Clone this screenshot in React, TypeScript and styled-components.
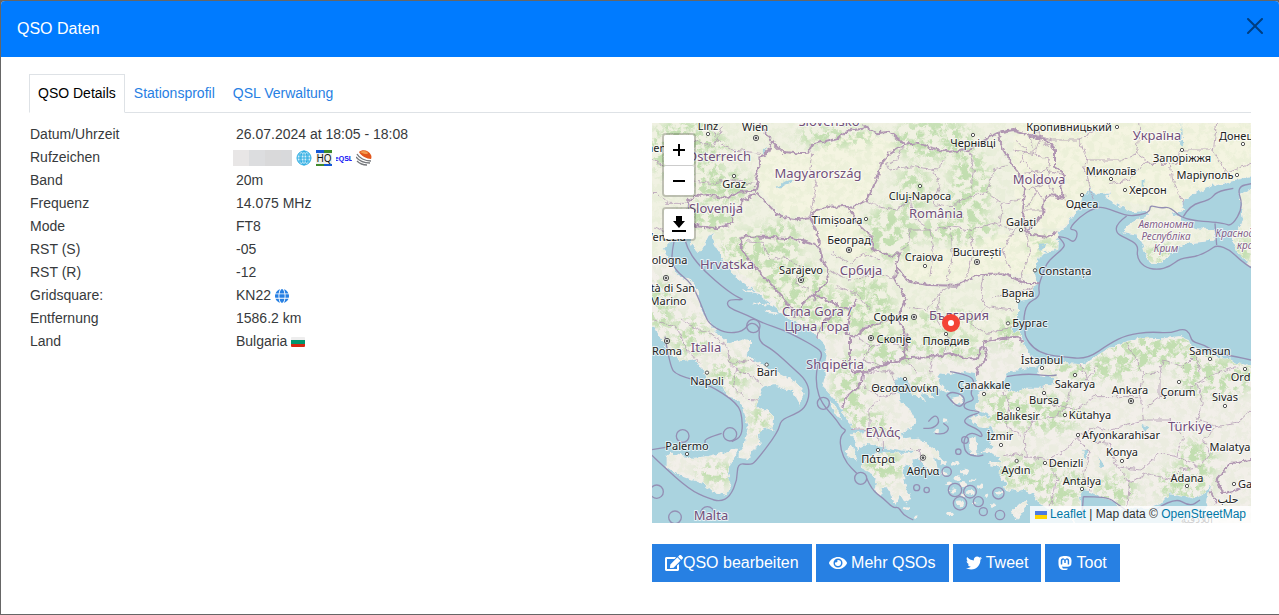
import React from 'react';
import styled, { createGlobalStyle } from 'styled-components';
import { FaEdit, FaEye, FaTwitter, FaMastodon } from 'react-icons/fa';
import { FaGlobe } from 'react-icons/fa6';

const GlobalStyle = createGlobalStyle`
  * { box-sizing: border-box; }
  body {
    margin: 0;
    background: #666;
    color: #373a3c;
    font: 14px/21px "Liberation Sans", Arial, sans-serif;
  }
  a { color: #2780e3; text-decoration: none; }
`;

const Page = styled.div`
  padding: 1px 0 1px 1px;
`;

const Dialog = styled.section`
  background: #fff;
  border-radius: 4px 4px 0 0;
  overflow: hidden;
`;

const Header = styled.header`
  display: flex;
  align-items: center;
  justify-content: space-between;
  height: 56px;
  padding: 0 16px;
  background: #007bff;
  color: #fff;
`;

const Title = styled.h1`
  margin: 0;
  font-size: 16px;
  line-height: 24px;
  font-weight: 400;
`;

const CloseButton = styled.button`
  display: flex;
  padding: 0 0 6px;
  border: 0;
  background: none;
  color: #000;
  opacity: 0.5;
  cursor: pointer;
`;

const Body = styled.div`
  padding: 17px 28px 32px;
`;

const Tabs = styled.nav`
  display: flex;
  border-bottom: 1px solid #dee2e6;
`;

const Tab = styled.a<{ $active?: boolean }>`
  padding: 8px;
  margin-bottom: -1px;
  border: 1px solid;
  border-color: ${(p) => (p.$active ? '#dee2e6 #dee2e6 #fff' : 'transparent')};
  && { color: ${(p) => (p.$active ? '#000' : '#2780e3')}; }
`;

const Columns = styled.div`
  display: grid;
  grid-template-columns: 1fr 1fr;
  margin-top: 10px;
`;

const DetailTable = styled.table`
  width: 100%;
  border-collapse: collapse;
  align-self: start;
`;

const Label = styled.th`
  width: 204px;
  padding: 1px;
  font-weight: 400;
  text-align: left;
`;

const Value = styled.td<{ $flush?: boolean }>`
  padding: 1px 1px 1px ${(p) => (p.$flush ? 0 : 3)}px;
`;

const Inline = styled.span<{ $gap: number }>`
  display: flex;
  align-items: center;
  gap: ${(p) => p.$gap}px;
  height: 21px;
  a, svg { display: block; }
`;

const MaskedCall = styled.span`
  width: 59px;
  height: 16px;
  background: linear-gradient(90deg, #e8e6e6 0 16px, #dcdddf 16px 32px, #d9d9da 32px 48px, #d8d9db 48px);
`;

const MapColumn = styled.div`
  padding-left: 12px;
`;

const MapFrame = styled.div`
  position: relative;
  height: 400px;
  overflow: hidden;
  background: #aad3df;
`;

const MapSvg = styled.svg`
  display: block;
  width: 100%;
  height: 100%;
  font-family: "Noto Sans", "DejaVu Sans", sans-serif;
`;

const Controls = styled.div`
  position: absolute;
  top: 10px;
  left: 10px;
  display: flex;
  flex-direction: column;
  gap: 10px;
`;

const ControlBar = styled.div`
  border: 2px solid rgba(0, 0, 0, 0.2);
  border-radius: 4px;
  background-clip: padding-box;
`;

const ControlButton = styled.button`
  display: flex;
  align-items: center;
  justify-content: center;
  width: 30px;
  height: 30px;
  padding: 0;
  border: 0;
  border-radius: 2px;
  background: #fff;
  color: #000;
  cursor: pointer;
  & + & { border-top: 1px solid #ccc; }
`;

const Attribution = styled.div`
  position: absolute;
  right: 0;
  bottom: 0;
  padding: 0 5px;
  background: rgba(255, 255, 255, 0.8);
  color: #333;
  font-size: 12px;
  line-height: 17px;
  a { color: #0078a8; }
  svg { vertical-align: -1px; }
`;

const Actions = styled.div`
  display: flex;
  gap: 4px;
  margin-top: 21px;
`;

const Action = styled.button`
  display: flex;
  align-items: center;
  height: 38px;
  padding: 0 13px;
  border: 0;
  background: #2780e3;
  color: #fff;
  font: 16px/24px "Liberation Sans", Arial, sans-serif;
  white-space: pre;
  cursor: pointer;
`;

// Outlines are digitised on a grid three times finer than the map's pixels.
const LAND = [
  '0,0 0,600 30,650 60,695 95,722 130,716 150,735 165,760 180,785 212,785 225,820 240,832 262,838 280,850 285,880 298,920 288,945 283,975 268,995 268,1012 295,1015 310,985 330,972 325,945 345,920 368,928 370,892 340,865 325,870 322,845 335,805 350,795 370,790 400,805 430,815 450,852 460,815 440,790 380,760 330,730 288,705 302,665 270,660 232,672 205,645 185,620 165,595 150,560 140,510 120,480 90,475 60,430 45,405 40,385 60,365 105,355 125,358 130,375 148,395 160,375 175,345 190,340 195,375 220,420 260,470 300,500 340,530 375,560 420,595 470,620 505,650 525,670 530,700 522,740 527,770 520,800 535,815 565,850 590,895 610,925 655,930 640,935 605,945 618,965 625,990 640,968 700,980 735,985 760,990 800,990 790,1000 740,1000 700,995 670,1005 645,1015 635,1042 665,1058 682,1078 675,1110 690,1125 703,1100 725,1115 735,1150 750,1115 768,1145 780,1130 768,1100 755,1060 765,1030 790,1045 785,1010 815,1020 840,1060 858,1050 850,1010 820,985 790,970 755,955 750,935 785,925 795,900 780,870 755,850 735,800 735,775 760,770 780,790 790,820 820,838 805,812 850,832 835,800 862,805 895,815 870,790 860,770 872,755 900,760 930,752 975,760 985,785 965,800 985,812 1020,790 1060,782 1075,755 1120,745 1165,735 1155,720 1135,700 1118,665 1110,640 1085,630 1102,600 1102,545 1135,540 1155,495 1150,455 1165,410 1190,395 1220,388 1225,335 1248,318 1262,295 1285,265 1290,235 1310,218 1325,195 1335,222 1380,222 1378,190 1386,225 1370,235 1400,252 1445,275 1495,270 1500,288 1460,300 1425,325 1420,338 1460,345 1478,370 1490,405 1500,430 1525,430 1560,400 1600,370 1650,365 1690,360 1697,330 1640,327 1600,310 1590,295 1560,280 1600,270 1595,245 1640,215 1690,195 1750,180 1810,165 1810,0',
  '990,815 1020,808 1065,810 1100,818 1125,805 1170,805 1210,790 1215,770 1170,765 1165,745 1200,725 1230,730 1300,735 1330,715 1380,685 1430,665 1490,655 1540,657 1590,650 1615,660 1620,680 1650,695 1690,712 1730,715 1760,730 1810,742 1810,1215 1660,1215 1672,1150 1685,1080 1665,1120 1630,1135 1600,1125 1560,1118 1530,1150 1490,1165 1450,1160 1420,1170 1390,1140 1350,1130 1320,1115 1295,1110 1285,1130 1290,1160 1270,1205 1250,1185 1200,1170 1170,1150 1150,1120 1120,1110 1100,1115 1060,1105 1075,1090 1050,1075 1055,1020 1020,995 990,995 1035,980 1020,960 1035,945 1030,920 1010,900 1030,885 975,870 985,845',
  '1750,370 1745,345 1770,320 1780,295 1770,225 1810,205 1810,450 1790,420 1765,400',
  '52,1010 65,1000 95,1010 130,1015 175,1010 215,1000 262,988 250,1020 232,1060 242,1095 230,1123 190,1115 160,1090 120,1075 80,1060 52,1040',
  '765,960 800,985 850,1005 880,1030 868,1000 835,975 800,955',
  '960,895 985,885 1015,900 1020,925 985,920',
  '905,835 935,830 930,850 910,855',
  '960,960 978,955 980,1000 965,1000',
  '1020,1025 1055,1025 1045,1040 1020,1038',
  '1085,1175 1125,1140 1130,1155 1100,1195',
  '540,850 555,855 575,895 560,885',
  '588,990 605,975 620,1020 595,1005',
];

const ISLETS: [number, number, number][] = [
  [915, 1030, 9], [945, 1055, 12], [940, 1095, 13], [910, 1110, 11], [960, 1115, 11], [930, 1150, 12],
  [990, 1100, 9], [1010, 1125, 8], [885, 1060, 9], [895, 1090, 8], [1050, 1120, 9], [975, 1150, 7],
  [1030, 1155, 7], [900, 1180, 8], [800, 1190, 5], [768, 1165, 9], [885, 900, 7], [860, 935, 7], [945, 795, 8],
  [920, 1075, 9], [880, 1030, 8], [965, 1080, 8], [940, 1125, 7],
];

const PLAINS = [
  '325,200 330,110 370,80 480,100 560,60 640,35 740,70 690,170 640,250 540,255 470,292 400,285',
  '485,265 620,260 640,330 700,400 600,420 490,370',
  '1090,9 1803,9 1803,170 1640,210 1580,275 1400,240 1290,260 1240,320 1120,330 1090,200',
  '740,400 900,390 1060,340 1220,340 1210,390 1150,460 1030,460 880,490 770,475',
];

const FORESTS: [number, number, number, number][] = [
  [110, 90, 120, 90], [220, 200, 90, 50], [170, 290, 90, 40], [330, 390, 120, 60], [430, 500, 110, 70],
  [560, 50, 120, 30], [850, 60, 120, 60], [960, 200, 60, 120], [920, 330, 120, 40], [720, 340, 80, 80],
  [790, 210, 50, 70], [540, 580, 100, 60], [660, 560, 70, 90], [720, 690, 90, 50], [890, 600, 110, 30],
  [900, 680, 120, 35], [600, 800, 50, 100], [660, 910, 60, 40], [700, 1040, 60, 50], [240, 760, 60, 50],
  [330, 900, 30, 50], [120, 650, 60, 60], [30, 560, 40, 80], [1080, 640, 40, 50], [1350, 740, 160, 40],
  [1520, 690, 160, 50], [1700, 770, 120, 60], [1070, 870, 80, 60], [1180, 880, 120, 60], [1120, 1060, 80, 50],
  [1220, 1100, 90, 60], [1400, 1110, 60, 50], [1600, 1090, 90, 50], [1640, 1020, 60, 60], [1530, 400, 50, 30],
  [1780, 390, 30, 40], [1180, 380, 50, 25], [200, 1060, 60, 35], [820, 790, 40, 30], [400, 330, 60, 25],
];

const BORDERS = [
  'M325,9L350,40L370,70L395,95L440,100L475,98L485,75L515,66L560,55L600,30L650,20L680,40L720,35L760,70',
  'M365,75L345,105L325,110L328,140L318,160L325,185L315,212',
  'M115,240L135,228L170,225L225,235L270,215L315,212L350,250L390,290L440,298L480,292L500,270L540,260L590,258L612,260L650,240L680,180L695,130L720,100L760,75L800,70L850,85L900,95L960,90L1000,60L1045,38',
  'M315,225L275,240L272,262L250,270L245,310L200,325L155,320L125,318',
  'M115,240L112,290L140,325',
  'M275,350L350,350L420,355L480,370L505,380M275,350L272,385L320,450L370,500L420,560L450,590',
  'M480,295L500,330L510,365L505,380L515,420L535,450L530,490L500,515L490,545',
  'M590,258L630,320L665,350L668,385L720,410L750,400L740,430L735,480L770,540L745,590L760,640L775,690',
  'M740,440L770,480L830,495L920,497L960,475L1000,462L1060,460L1120,488L1168,490',
  'M430,590L460,550L490,520L540,545L600,570L620,540M500,650L520,610L550,580M600,560L590,640L610,650L650,620L720,600L750,600',
  'M600,650L600,740L615,760L640,755L635,790L590,830L575,865M610,757L650,755L700,735L760,715L770,640',
  'M700,735L760,715L830,712L900,700L950,715L985,715L1000,665L1050,655L1100,650L1118,665M1000,680L1010,690L1008,720L985,740L980,765',
  'M1045,38L1060,90L1085,130L1110,170L1125,210L1120,260L1120,310L1125,330L1145,345L1190,350L1225,335',
  'M1045,38L1090,30L1140,45L1190,60L1215,90L1215,140L1245,165L1230,200L1245,235L1200,225L1180,240L1180,280L1150,320L1125,330',
  'M1803,1020L1740,1030L1700,1080L1720,1120L1760,1110L1803,1090M1680,1110L1700,1150',
];

const REGIONS = [
  'M9,120L60,150L110,180L180,190L240,180L310,190M130,60L190,80L220,20M180,9L200,60L250,90L330,100M9,210L50,250L110,250M9,320L60,340L110,330',
  'M485,100L480,150L500,190L490,240L480,290M760,75L740,120L710,130L720,150L790,140L860,150L890,110M850,150L870,200L850,250L900,260L960,230L1010,220L1060,250L1110,240',
  'M650,240L680,260L740,270L780,240L800,300L840,330L850,400L840,470M720,410L770,380L780,330L840,330L900,320L960,330L1030,310L1090,330L1120,300M1090,330L1060,390L1080,450M960,330L970,400L950,470M900,320L910,400L890,480M1130,340L1140,400L1110,480',
  'M960,90L970,150L960,230M1010,220L1030,150L1070,140M1060,250L1050,310M1125,160L1190,150L1245,165M1130,210L1190,190M1090,90L1150,100L1170,60L1215,90M1120,120L1170,180L1150,230L1125,270L1180,270M1140,45L1150,100L1200,120L1190,190L1220,230M1100,60L1130,90L1110,130M1150,200L1180,240M1170,60L1160,20',
  'M1090,30L1210,60L1290,60L1310,120L1420,120L1460,100M1290,60L1370,9M1470,9L1460,100L1500,130L1580,130L1590,90L1690,90L1700,9M1310,160L1330,240M1380,190L1440,180L1480,130L1560,130L1570,190L1600,250M1690,90L1730,160L1803,130M1310,120L1300,160L1340,170',
  'M285,365L340,370L360,420L400,410L450,440L440,490L480,510M545,400L600,430L640,400L690,420M535,450L600,480L680,460L740,480M560,500L620,520L660,570M770,560L830,570L870,520L900,500M1000,465L990,520L1010,560L960,610M870,520L860,600L900,660L880,700M960,610L1010,640L1090,620M1030,530L1100,520L1150,500M1010,560L1090,570M620,650L660,680L640,720L690,735M660,680L720,660L760,690',
  'M9,600L80,620L110,690L150,730M90,600L150,630L180,640L230,680L240,730L260,750L250,800L280,830M240,730L310,720L330,745M260,750L310,770L340,800M285,838L325,840',
  'M640,800L690,830L660,870L660,920L690,960M690,830L740,820M700,960L700,990M600,925L660,930M780,985L810,995L815,1025M640,760L720,750L740,800M850,710L840,760M770,720L800,760',
  'M1060,810L1080,860L1070,920L1120,950L1150,900L1220,890L1250,860L1260,800L1300,790L1340,740M1180,800L1200,850L1280,870L1330,830L1400,830L1470,830L1480,760L1430,670M1120,950L1130,1010L1200,1020L1250,990L1280,950L1340,920L1370,930L1480,900L1470,830M1200,1020L1220,1080L1200,1160M1280,950L1320,1000L1300,1060L1320,1110M1060,1010L1110,1000L1130,1010',
  'M1320,965L1380,970L1400,1040L1470,1050L1530,1000L1580,1010L1600,950L1560,900L1480,900M1480,760L1530,760L1540,720L1600,740L1640,700M1530,760L1530,830L1490,860M1530,830L1600,820L1640,790L1700,760L1760,740M1640,790L1660,850L1640,900L1700,920L1760,910L1803,870M1580,1010L1650,1040L1680,1000L1660,960L1700,920M1400,1040L1440,1090L1430,1160M1440,1090L1490,1060L1560,1080L1590,1050L1650,1040M1640,700L1650,760M1290,735L1320,790',
];

const MARITIME = [
  'M72,365L62,412L75,450L125,490L148,540L165,585L178,612L225,640L280,635L300,605L330,620L325,665L370,690L430,745L468,780L480,820L465,865L430,885L392,900L385,935L315,1028L300,1034L262,1030L262,1080L240,1130L210,1145L175,1135L120,1110L30,1030L0,1000M0,990L60,980',
  'M105,360L112,388L150,440L210,495L258,530L285,540L240,538L230,550L240,565L290,585L340,610L400,630L450,655L495,680L520,700L500,740L498,800L515,850L560,900L575,925L590,930L570,950L572,990L590,1030L620,1060',
  'M45,650L60,740L80,765L170,790L265,850L278,900L275,950L245,965M215,940L165,955L165,970M650,1075L665,1110L700,1135L730,1165L745,1160L760,1185L790,1200',
  'M1225,350L1250,352L1270,368L1282,350L1280,330L1255,328L1290,290L1330,265L1360,260L1430,288L1470,285L1500,275L1500,255L1530,265L1560,260L1600,300L1720,308L1745,320L1780,260L1760,200L1810,190',
  'M1430,288L1400,310L1398,340L1430,355L1465,375L1460,410L1480,440L1520,450L1560,440L1590,415L1640,410L1680,390L1700,375L1740,390L1770,420L1803,443M1695,310L1700,375M1600,290L1620,255L1680,240L1700,215L1750,205',
  'M1225,350L1245,370L1240,385L1210,410L1190,430L1175,470L1165,500L1170,530L1130,550L1120,600L1125,625L1125,650L1150,685L1190,705L1240,710L1310,718L1380,670L1430,645L1500,635L1560,640L1600,625L1620,640L1625,665L1665,675L1700,700L1760,710L1803,720',
  'M1070,770L1120,760L1200,768L1220,765M900,755L960,765L975,790L960,820L975,840L940,850L945,870L1000,875L950,890L940,910L990,930L1000,955L965,935L940,955L945,1000L980,1010L1000,1005',
  'M1300,1130L1370,1130L1400,1150L1440,1180M1300,1130L1295,1200M1500,1180L1570,1130L1620,1160L1650,1140',
  'M890,825L920,865L945,850L940,825L905,815L890,825M835,905L855,880L870,905L850,925L820,925M855,940L880,945L900,925L880,910',
];

const SEA_RINGS: [number, number, number][] = [
  [310, 618, 20], [98, 948, 19], [20, 1115, 20], [75, 1192, 19], [172, 1180, 20], [632, 1075, 18],
  [240, 943, 20], [800, 1103, 9], [830, 1110, 8], [925, 995, 8], [945, 960, 10], [1000, 1175, 12], [520, 850, 18], [1050, 1185, 14],
  [915, 1110, 20], [960, 1115, 19], [930, 1150, 20], [1045, 1120, 17], [985, 1145, 15], [890, 1055, 14],
];

// Rounds the corners of a polyline by curving through the middle of each segment.
const smooth = (path: string) =>
  path
    .split('M')
    .filter(Boolean)
    .map((part) => {
      const points = part.split('L').map((pair) => pair.split(',').map(Number));
      const curves = points.slice(1, -1).map(([x, y], i) => {
        const [nx, ny] = points[i + 2];
        return `Q${x},${y} ${(x + nx) / 2},${(y + ny) / 2}`;
      });
      return `M${points[0]}${curves.join('')}L${points[points.length - 1]}`;
    })
    .join('');

type Kind = 'city' | 'country' | 'region';
const LABELS: [string, number, number, Kind?][] = [
  ['Linz', 175, 30], ['Wien', 316, 34], ['Slovensko', 538, 18, 'country'], ['München', -25, 96],
  ['Österreich', 208, 123, 'country'], ['Graz', 253, 204], ['Magyarország', 505, 174, 'country'],
  ['Slovenija', 198, 279, 'country'], ['Venezia', 47, 363], ['Bologna', 49, 432], ['Città di San', 48, 515],
  ['Marino', 53, 556], ['Hrvatska', 232, 447, 'country'], ['Timișoara', 560, 311], ['Београд', 596, 371],
  ['Sarajevo', 454, 463], ['Србија', 633, 465, 'country'], ['Cluj-Napoca', 810, 240],
  ['România', 858, 294, 'country'], ['Craiova', 823, 424], ['Crna Gora /', 502, 588, 'country'],
  ['Црна Гора', 502, 633, 'country'], ['София', 722, 603], ['България', 928, 600, 'country'],
  ['Чернівці', 969, 80], ['Кропивницький', 1258, 33], ['Україна', 1520, 60, 'country'],
  ['Донецьк', 1775, 59], ['Запоріжжя', 1596, 126], ['Миколаїв', 1383, 165], ['Маріуполь', 1664, 177],
  ['Moldova', 1168, 192, 'country'], ['Херсон', 1495, 223], ['Одеса', 1297, 263], ['Galați', 1113, 317],
  ['București', 981, 408], ['Constanța', 1246, 465], ['Варна', 1105, 530], ['Бургас', 1139, 621],
  ['Автономна', 1549, 324, 'region'], ['Республіка', 1549, 360, 'region'], ['Крим', 1549, 396, 'region'],
  ['Краснодарский', 1802, 351, 'region'], ['край', 1795, 387, 'region'],
  ['Roma', 51, 704], ['Italia', 167, 695, 'country'], ['Napoli', 171, 795], ['Bari', 350, 767],
  ['Скопје', 732, 669], ['Пловдив', 888, 674], ['Shqipëria', 555, 747, 'country'],
  ['Θεσσαλονίκη', 765, 815], ['Ελλάς', 700, 950, 'country'], ['Πάτρα', 683, 1028], ['Αθήνα', 819, 1064],
  ['Palermo', 111, 989], ['Malta', 182, 1200, 'country'], ['İstanbul', 1177, 731], ['Samsun', 1680, 706],
  ['Çanakkale', 1002, 808], ['Sakarya', 1274, 803], ['Ankara', 1441, 823], ['Çorum', 1585, 828],
  ['Sivas', 1725, 844], ['Ordu', 1781, 782], ['Bursa', 1183, 853], ['Balıkesir', 1103, 900],
  ['Kütahya', 1321, 898], ['Türkiye', 1619, 934, 'country'], ['İzmir', 1051, 961],
  ['Afyonkarahisar', 1412, 957], ['Konya', 1417, 1009], ['Malatya', 1741, 993], ['Aydın', 1099, 1061],
  ['Denizli', 1249, 1041], ['Antalya', 1295, 1095], ['Adana', 1610, 1086], ['Gaziantep', 1842, 1104],
  ['حلب', 1735, 1150], ['اللاذقية', 1640, 1210],
];

const CAPITALS = [[318, 54], [48, 474], [597, 390], [453, 480], [792, 591], [981, 426], [51, 663], [663, 654], [819, 1013], [1443, 843]];
const TOWNS = [
  [174, 42], [252, 168], [648, 297], [810, 198], [825, 438], [969, 45], [1401, 21], [1779, 72], [1596, 90],
  [1383, 177], [1761, 165], [1425, 210], [1296, 225], [1113, 330], [1155, 451], [1104, 543], [1074, 610],
  [171, 758], [350, 734], [888, 642], [765, 777], [684, 990], [111, 1002], [1176, 744], [1680, 717],
  [1002, 822], [1275, 765], [1587, 786], [1725, 858], [1785, 747], [1182, 819], [1104, 867], [1245, 885],
  [1053, 975], [1284, 945], [1416, 1023], [1100, 1023], [1185, 1029], [1296, 1107], [1611, 1098], [1752, 1092],
];

const LABEL_STYLE = {
  city: { size: 11, fill: '#222', italic: false },
  country: { size: 13, fill: '#714f7a', italic: false },
  region: { size: 10, fill: '#835f8a', italic: true },
};

const RegionMap = () => (
  <MapSvg viewBox="0 0 599 400" preserveAspectRatio="xMidYMid slice" role="img" aria-label="Karte">
    <defs>
      <filter id="woods" x="0" y="0" width="100%" height="100%" colorInterpolationFilters="sRGB">
        <feGaussianBlur in="SourceGraphic" stdDeviation="14" result="soft" />
        <feTurbulence type="fractalNoise" baseFrequency="0.045" numOctaves="5" seed="7" />
        <feColorMatrix values="0 0 0 0 0.76  0 0 0 0 0.87  0 0 0 0 0.69  0 6 0 0 -2.6" />
        <feComposite operator="in" in2="soft" />
      </filter>
      <filter id="coast" x="0" y="0" width="100%" height="100%">
        <feTurbulence type="fractalNoise" baseFrequency="0.06" numOctaves="3" seed="3" />
        <feDisplacementMap in="SourceGraphic" scale="18" xChannelSelector="R" yChannelSelector="G" />
      </filter>
      <clipPath id="land">
        {LAND.map((points) => <polygon key={points} points={points} />)}
      </clipPath>
    </defs>
    <g transform="translate(-2 -3) scale(0.33333)">
      <rect width="1810" height="1215" fill="#aad3df" />
      <g filter="url(#coast)">
        <rect x="-30" y="-30" width="1870" height="1270" fill="#aad3df" />
        <g fill="#f2efe9">
          {LAND.map((points) => <polygon key={points} points={points} stroke="#f2efe9" strokeWidth="4" />)}
          {ISLETS.map(([x, y, r]) => <ellipse key={`${x}-${y}`} cx={x} cy={y} rx={r} ry={r * 0.7} />)}
        </g>
        <g clipPath="url(#land)">
          <path d="M0,0H1810V460L1150,640L900,690L600,640L400,560L260,450L0,400Z" fill="#f0f1e2" />
          {PLAINS.map((points) => <polygon key={points} points={points} fill="#f4f4e1" />)}
          <g filter="url(#woods)">
            <rect x="-30" y="-30" width="1870" height="1275" fill="#fff" opacity="0.15" />
            {FORESTS.map(([x, y, rx, ry]) => <ellipse key={`${x}-${y}`} cx={x} cy={y} rx={rx} ry={ry} />)}
          </g>
        </g>
        <g fill="#aad3df">
          <path d="M375,205L400,185L432,178L425,190L395,200ZM342,85L350,80L346,100L338,96Z" />
          <path d="M1300,990L1312,985L1310,1015L1302,1010ZM1345,1010L1362,1040L1350,1040ZM1475,915L1495,920L1490,935L1478,930Z" />
          <path d="M1166,375L1190,372L1185,385L1170,390ZM1478,220L1484,180L1478,180ZM1596,9L1600,80L1590,70Z" />
        </g>
        <g fill="none" stroke="#f2efe9" strokeWidth="5">
          <path d="M200,370L215,400M215,365L235,410M240,440L290,490M280,510L330,520M310,550L360,555M340,575L385,580" />
        </g>
      </g>
      <g filter="url(#coast)" fill="none" strokeLinejoin="round">
        <rect x="-30" y="-30" width="1870" height="1270" />
        <g stroke="#b49bb6" strokeWidth="3" opacity="0.8">{REGIONS.map((d) => <path key={d} d={d} />)}</g>
        <g stroke="#b096b2" strokeWidth="6">{BORDERS.map((d) => <path key={d} d={d} />)}</g>
      </g>
      <g fill="none" stroke="#948fb4" strokeWidth="4" strokeLinejoin="round">
        {MARITIME.map((d) => <path key={d} d={smooth(d)} />)}
        {SEA_RINGS.map(([x, y, r]) => <circle key={`${x}-${y}`} cx={x} cy={y} r={r} />)}
      </g>
      <g fill="#fff" stroke="#555" strokeWidth="3">
        {TOWNS.map(([x, y]) => <circle key={`${x}-${y}`} cx={x} cy={y} r="5" />)}
        {CAPITALS.map(([x, y]) => (
          <g key={`${x}-${y}`}>
            <circle cx={x} cy={y} r="8" />
            <circle cx={x} cy={y} r="3" fill="#333" />
          </g>
        ))}
      </g>
    </g>
    <g textAnchor="middle" stroke="#fff" strokeOpacity="0.7" strokeWidth="2" strokeLinejoin="round" paintOrder="stroke">
      {LABELS.map(([name, x, y, kind = 'city']) => {
        const style = LABEL_STYLE[kind];
        return (
          <text
            key={name}
            x={Math.round(x / 3) - 2}
            y={Math.round(y / 3) - 3}
            fontSize={style.size}
            fill={style.fill}
            fontStyle={style.italic ? 'italic' : 'normal'}
          >
            {name}
          </text>
        );
      })}
    </g>
    <circle cx="299" cy="200" r="6" fill="#fff" stroke="#f44336" strokeWidth="6" />
  </MapSvg>
);

const QrzIcon = () => (
  <svg width="16" height="16" viewBox="0 0 16 16" fill="none" stroke="#29abe2">
    <circle cx="8" cy="8" r="7" fill="#d5eefa" />
    <ellipse cx="8" cy="8" rx="3" ry="7" />
    <path d="M8 1v14M1 8h14M2 5h12M2 11h12M4 3v10M12 3v10" strokeWidth="0.9" />
  </svg>
);

const HamQthIcon = () => (
  <svg width="16" height="16" viewBox="0 0 16 16">
    <rect width="16" height="16" fill="#f1f1ee" />
    <path d="M0 0h8v3H0zM8 14h8v2H8z" fill="#1558d6" />
    <path d="M8 0h8v3H8zM0 14h8v2H0z" fill="#3f8a2b" />
    <text x="8" y="12" textAnchor="middle" fontFamily="Noto Sans, sans-serif" fontSize="10" fill="#111">HQ</text>
  </svg>
);

const EqslIcon = () => (
  <svg width="16" height="16" viewBox="0 0 16 16">
    <text
      x="8"
      y="11"
      textAnchor="middle"
      fontFamily="Liberation Sans Narrow, Liberation Sans, sans-serif"
      fontWeight="700"
      fontSize="7"
      fill="#0a0af5"
    >
      eQSL
    </text>
  </svg>
);

const ClublogIcon = () => (
  <svg width="16" height="16" viewBox="0 0 16 16" fill="none">
    <path d="M1 4c2 4 8 7 14 7M0 7c3 4 8 6 14 6M1 11c3 3 6 4 10 4" stroke="#75787c" strokeWidth="1.3" />
    <path d="M3 2C6-1 13 0 15 5c1 2 0 4 0 4C11 9 5 6 3 2z" fill="#e2571c" />
    <path d="M4 2c3-2 7-1 8 1 0 2-5 1-8-1z" fill="#f39a4d" />
  </svg>
);

const BulgarianFlag = () => (
  <svg width="14" height="10" viewBox="0 0 14 10">
    <rect width="14" height="4" rx="1" fill="#eee" />
    <rect y="6" width="14" height="4" rx="1" fill="#d62612" />
    <rect y="3" width="14" height="4" fill="#00966e" />
  </svg>
);

const DETAILS: { label: string; value: React.ReactNode; flush?: boolean }[] = [
  { label: 'Datum/Uhrzeit', value: '26.07.2024 at 18:05 - 18:08' },
  {
    label: 'Rufzeichen',
    flush: true,
    value: (
      <Inline $gap={4}>
        <MaskedCall />
        <a href="#qrz" aria-label="QRZ.com"><QrzIcon /></a>
        <a href="#hamqth" aria-label="HamQTH"><HamQthIcon /></a>
        <a href="#eqsl" aria-label="eQSL"><EqslIcon /></a>
        <a href="#clublog" aria-label="Clublog"><ClublogIcon /></a>
      </Inline>
    ),
  },
  { label: 'Band', value: '20m' },
  { label: 'Frequenz', value: '14.075 MHz' },
  { label: 'Mode', value: 'FT8' },
  { label: 'RST (S)', value: '-05' },
  { label: 'RST (R)', value: '-12' },
  {
    label: 'Gridsquare:',
    value: (
      <Inline $gap={4}>
        KN22
        <a href="#grid" aria-label="Gridsquare"><FaGlobe size={14} /></a>
      </Inline>
    ),
  },
  { label: 'Entfernung', value: '1586.2 km' },
  { label: 'Land', value: <Inline $gap={4}>Bulgaria<BulgarianFlag /></Inline> },
];

const EditIcon = styled(FaEdit)`width: 18px;`;
const EyeIcon = styled(FaEye)`width: 18px;`;
const TootIcon = styled(FaMastodon)`width: 14px;`;

export default function App() {
  return (
    <>
      <GlobalStyle />
      <Page>
        <Dialog role="dialog" aria-labelledby="dialog-title">
          <Header>
            <Title id="dialog-title">QSO Daten</Title>
            <CloseButton aria-label="Schließen">
              <svg width="16" height="16" viewBox="0 0 16 16" fill="currentColor">
                <path d="M.293.293a1 1 0 0 1 1.414 0L8 6.586 14.293.293a1 1 0 1 1 1.414 1.414L9.414 8l6.293 6.293a1 1 0 0 1-1.414 1.414L8 9.414l-6.293 6.293a1 1 0 0 1-1.414-1.414L6.586 8 .293 1.707a1 1 0 0 1 0-1.414z" />
              </svg>
            </CloseButton>
          </Header>
          <Body>
            <Tabs>
              <Tab href="#details" $active>QSO Details</Tab>
              <Tab href="#station">Stationsprofil</Tab>
              <Tab href="#qsl">QSL Verwaltung</Tab>
            </Tabs>
            <Columns>
              <DetailTable>
                <tbody>
                  {DETAILS.map((row) => (
                    <tr key={row.label}>
                      <Label scope="row">{row.label}</Label>
                      <Value $flush={row.flush}>{row.value}</Value>
                    </tr>
                  ))}
                </tbody>
              </DetailTable>
              <MapColumn>
                <MapFrame>
                  <RegionMap />
                  <Controls>
                    <ControlBar>
                      <ControlButton aria-label="Vergrößern">
                        <svg width="14" height="14" viewBox="0 0 14 14"><path d="M1 7h12M7 1v12" stroke="#000" strokeWidth="2" /></svg>
                      </ControlButton>
                      <ControlButton aria-label="Verkleinern">
                        <svg width="14" height="14" viewBox="0 0 14 14"><path d="M1 7h12" stroke="#000" strokeWidth="2" /></svg>
                      </ControlButton>
                    </ControlBar>
                    <ControlBar>
                      <ControlButton aria-label="Karte herunterladen">
                        <svg width="14" height="16" viewBox="0 0 14 16"><path d="M4 0h6v5h3l-6 7-6-7h3zM0 14h14v2H0z" /></svg>
                      </ControlButton>
                    </ControlBar>
                  </Controls>
                  <Attribution>
                    <a href="#leaflet">
                      <svg width="12" height="8" viewBox="0 0 12 8"><path fill="#4c7be1" d="M0 0h12v4H0z" /><path fill="#ffd500" d="M0 4h12v4H0z" /></svg>
                      {' '}Leaflet
                    </a>
                    {' | Map data © '}
                    <a href="#osm">OpenStreetMap</a>
                  </Attribution>
                </MapFrame>
                <Actions>
                  <Action><EditIcon />QSO bearbeiten</Action>
                  <Action><EyeIcon />{' Mehr QSOs'}</Action>
                  <Action><FaTwitter />{' Tweet'}</Action>
                  <Action><TootIcon />{' Toot'}</Action>
                </Actions>
              </MapColumn>
            </Columns>
          </Body>
        </Dialog>
      </Page>
    </>
  );
}
